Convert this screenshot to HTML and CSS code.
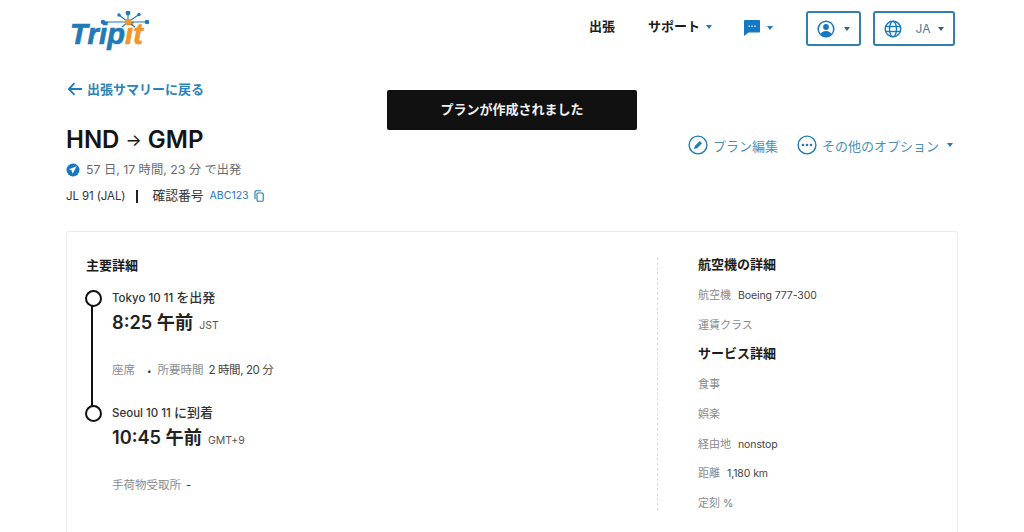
FILE: index.html
```html
<!DOCTYPE html>
<html lang="ja">
<head>
<meta charset="utf-8">
<title>TripIt</title>
<link rel="stylesheet" href="styles.css">
</head>
<body>
<header class="topbar">
  <a class="logo">
    <span class="logo-text"><span class="logo-trip">Trip</span><span class="logo-it">it</span></span>
    <svg class="logo-mark" width="82" height="28" viewBox="0 0 82 28">
      <g stroke="#1f7ab5" stroke-width="1.100">
        <line x1="33" y1="11" x2="77" y2="11"/>
        <line x1="58" y1="11" x2="58" y2="2"/>
        <line x1="58" y1="11" x2="49" y2="4"/>
        <line x1="58" y1="11" x2="69" y2="3.500"/>
        <line x1="58" y1="11" x2="52" y2="16"/>
        <line x1="58" y1="11" x2="65" y2="16"/>
      </g>
      <g fill="#1f7ab5">
        <circle cx="33" cy="11" r="2.300"/>
        <circle cx="77" cy="11" r="2.300"/>
        <circle cx="58" cy="2" r="2.400"/>
        <circle cx="49" cy="4" r="1.700"/>
        <circle cx="69" cy="3.500" r="1.700"/>
      </g>
      <circle cx="58" cy="11" r="3.300" fill="#f2952b"/>
    </svg>
  </a>
  <nav class="nav">
    <span class="nav-link nav-trips">出張</span>
    <span class="nav-link nav-support">サポート<i class="caret"></i></span>
    <span class="nav-msg">
      <svg width="18" height="18" viewBox="0 0 18 18"><path d="M2 1h14a1 1 0 0 1 1 1v10.500a1 1 0 0 1-1 1H5.500L1 17V2a1 1 0 0 1 1-1z" fill="#1578c2"/><g fill="#fff"><rect x="5.500" y="6.500" width="1.300" height="1.300"/><rect x="8.400" y="6.500" width="1.300" height="1.300"/><rect x="11.300" y="6.500" width="1.300" height="1.300"/></g></svg>
      <i class="caret"></i>
    </span>
    <span class="box box-user">
      <svg width="18" height="18" viewBox="0 0 18 18"><circle cx="9" cy="9" r="7.800" fill="#fff" stroke="#1578c2" stroke-width="1.500"/><circle cx="9" cy="7" r="2.900" fill="#1578c2"/><path d="M3.500 14.200C4.500 11.600 6.700 10.900 9 10.900s4.500.7 5.500 3.300A7.500 7.500 0 0 1 9 16.500a7.500 7.500 0 0 1-5.500-2.300z" fill="#1578c2"/></svg>
      <i class="caret caret-dark"></i>
    </span>
    <span class="box box-lang">
      <svg width="18" height="18" viewBox="0 0 18 18" fill="none" stroke="#1578c2" stroke-width="1.400"><circle cx="9" cy="9" r="7.800"/><ellipse cx="9" cy="9" rx="3.500" ry="7.800"/><line x1="1.500" y1="6.500" x2="16.500" y2="6.500"/><line x1="1.500" y1="11.500" x2="16.500" y2="11.500"/></svg>
      <span class="lang">JA</span>
      <i class="caret caret-dark"></i>
    </span>
  </nav>
</header>

<main class="page">
  <a class="back">
    <svg class="back-icon" width="16" height="14" viewBox="0 0 16 14" fill="none" stroke="#1f7ab5" stroke-width="1.800"><path d="M15 7H2M7.500 1.200 1.800 7l5.700 5.800"/></svg>
    出張サマリーに戻る
  </a>

  <section class="summary">
    <div class="summary-left">
      <h1 class="route">HND <span class="arrow">→</span> GMP</h1>
      <div class="countdown">
        <svg width="14" height="14" viewBox="0 0 14 14"><circle cx="7" cy="7" r="6.500" fill="#1578c2"/><path d="M10.800 3.200 2.900 6.300l2.700 1 .9 3.500z" fill="#fff"/></svg>
        57 日, 17 時間, 23 分 で出発
      </div>
      <div class="flight">
        <span class="flight-no">JL 91 (JAL)</span>
        <span class="sep"></span>
        <span class="conf-label">確認番号</span>
        <span class="conf">ABC123</span>
        <svg width="10" height="12" viewBox="0 0 10 12" fill="none" stroke="#1f7ab5" stroke-width="1.100"><rect x="3" y="3" width="6.200" height="8.300" rx="1"/><path d="M1 9V1.800a1 1 0 0 1 1-1h5"/></svg>
      </div>
    </div>
    <div class="actions">
      <span class="action">
        <svg width="20" height="20" viewBox="0 0 20 20" fill="none"><circle cx="10" cy="10" r="8.900" stroke="#1f7ab5" stroke-width="1.400"/><path d="M6 14l.8-3 5-5 2.200 2.200-5 5z" fill="#1f7ab5"/></svg>
        プラン編集
      </span>
      <span class="action">
        <svg width="20" height="20" viewBox="0 0 20 20"><circle cx="10" cy="10" r="8.900" fill="none" stroke="#1f7ab5" stroke-width="1.400"/><g fill="#1f7ab5"><circle cx="6" cy="10" r="1.300"/><circle cx="10" cy="10" r="1.300"/><circle cx="14" cy="10" r="1.300"/></g></svg>
        その他のオプション<i class="caret"></i>
      </span>
    </div>
  </section>

  <section class="card">
    <div class="main-col">
      <h2 class="heading">主要詳細</h2>
      <div class="timeline">
        <div class="stop stop-dep">
          <span class="stop-title">Tokyo 10 11 <span class="jp">を出発</span></span>
          <div class="time"><b>8:25 午前</b><span class="tz">JST</span></div>
          <div class="meta"><span class="label">座席</span><span class="dot">•</span><span class="label">所要時間</span><span class="val">2 時間, 20 分</span></div>
        </div>
        <div class="stop stop-arr">
          <span class="stop-title">Seoul 10 11 <span class="jp">に到着</span></span>
          <div class="time"><b>10:45 午前</b><span class="tz">GMT+9</span></div>
          <div class="meta"><span class="label">手荷物受取所</span><span class="val">-</span></div>
        </div>
      </div>
    </div>
    <aside class="side">
      <h2 class="heading side-heading">航空機の詳細</h2>
      <div class="row"><span class="label">航空機</span><span class="val">Boeing 777-300</span></div>
      <div class="row"><span class="label">運賃クラス</span></div>
      <h2 class="heading side-heading">サービス詳細</h2>
      <div class="row"><span class="label">食事</span></div>
      <div class="row"><span class="label">娯楽</span></div>
      <div class="row"><span class="label">経由地</span><span class="val">nonstop</span></div>
      <div class="row"><span class="label">距離</span><span class="val">1,180 km</span></div>
      <div class="row"><span class="label">定刻</span><span class="pct">%</span></div>
    </aside>
  </section>
</main>

<div class="toast">プランが作成されました</div>
</body>
</html>
```

FILE: styles.css
```css
* { box-sizing: border-box; }
html, body {
  margin: 0;
  height: 532px;
  overflow: hidden;
  background: #fff;
}
body {
  position: relative;
  font-family: Inter, "Noto Sans CJK JP", sans-serif;
  color: #222;
}
.topbar {
  height: 79px;
  display: flex;
  justify-content: space-between;
  padding: 11px 69px 0 70px;
}
.logo {
  position: relative;
  display: block;
  width: 80px;
  height: 36px;
}
.logo-mark {
  position: absolute;
  left: 0;
  top: 0;
}
.logo-text {
  position: absolute;
  left: 0;
  top: 7px;
  font: italic 700 29px/32px "Liberation Sans", sans-serif;
  letter-spacing: .2px;
  -webkit-text-stroke: .7px currentColor;
}
.logo-trip { color: #1f7ab5; }
.logo-it { color: #f2952b; }
.nav {
  display: flex;
  align-items: flex-start;
}
.nav-link {
  font-size: 13px;
  font-weight: 700;
  line-height: 30px;
  color: #1c1c1c;
}
.nav-support { margin-left: 33px; }
.nav-msg {
  display: flex;
  align-items: center;
  height: 33px;
  margin-left: 31px;
}
.caret {
  display: inline-block;
  width: 0;
  height: 0;
  margin-left: 6px;
  vertical-align: middle;
  border-left: 3.500px solid transparent;
  border-right: 3.500px solid transparent;
  border-top: 4px solid #1f7ab5;
}
.caret-dark { border-top-color: #33637f; }
.box {
  display: flex;
  align-items: center;
  height: 35px;
  border: 2px solid #2f80ae;
  border-radius: 3px;
  padding: 0 9px;
  color: #4d7a96;
}
.box-user {
  width: 55px;
  margin-left: 33px;
  justify-content: space-between;
}
.box-lang {
  width: 82px;
  margin-left: 12px;
  justify-content: space-between;
}
.lang { font-size: 12px; margin-left: 6px; }
.box .caret { margin-left: 0; }
.page { padding: 0 66px; }
.back {
  display: flex;
  align-items: center;
  gap: 4px;
  height: 18px;
  font-size: 13px;
  font-weight: 700;
  color: #2b84b8;
  margin-left: 1px;
}
.back-icon { margin-top: 2px; }
.summary {
  display: flex;
  justify-content: space-between;
  margin-top: 27px;
}
.route {
  margin: 0;
  font-size: 24px;
  line-height: 32px;
  font-weight: 600;
  color: #141414;
}
.arrow { font-weight: 400; font-size: 17px; vertical-align: 2px; }
.countdown {
  display: flex;
  align-items: center;
  gap: 6px;
  margin-top: 4px;
  font-size: 12.300px;
  line-height: 20px;
  color: #6b6b6b;
}
.flight {
  display: flex;
  align-items: center;
  margin-top: 6px;
  font-size: 11.500px;
  line-height: 20px;
  color: #333;
}
.flight-no { letter-spacing: -.1px; }
.sep {
  width: 2px;
  height: 13px;
  margin: 0 14px 0 11px;
  background: #222;
}
.conf-label { font-size: 12.800px; }
.conf {
  margin: 0 5px 0 6px;
  font-size: 10.500px;
  color: #1f7ab5;
}
.actions {
  display: flex;
  gap: 19px;
  margin: 10px 5px 0 0;
}
.action {
  display: flex;
  align-items: center;
  gap: 5px;
  height: 22px;
  font-size: 13px;
  color: #4f8fb5;
}
.action .caret { margin-left: 3px; }
.card {
  display: flex;
  margin-top: 25px;
  height: 301px;
  border: 1px solid #ececec;
  border-bottom: 0;
  border-radius: 3px 3px 0 0;
  padding: 23px 0 0 19px;
}
.main-col {
  width: 571px;
  flex: none;
}
.heading {
  margin: 0;
  font-size: 13px;
  line-height: 20px;
  font-weight: 700;
  color: #1c1c1c;
}
.timeline {
  position: relative;
  margin-top: 12px;
  padding-left: 26px;
}
.timeline::before {
  content: "";
  position: absolute;
  left: 5px;
  top: 10px;
  width: 2px;
  height: 114px;
  background: #111;
}
.stop { position: relative; }
.stop::before {
  content: "";
  position: absolute;
  left: -27px;
  top: 3px;
  width: 13px;
  height: 13px;
  border: 2px solid #111;
  border-radius: 50%;
  background: #fff;
}
.stop-title {
  display: block;
  font-size: 11.500px;
  font-weight: 500;
  line-height: 20px;
  color: #333;
}
.jp { font-size: 13px; }
.time {
  display: flex;
  align-items: baseline;
  gap: 6px;
  margin-top: 2px;
}
.time b {
  font-size: 18.200px;
  line-height: 24px;
  font-weight: 600;
  color: #222;
}
.tz { font-size: 10.500px; color: #555; }
.meta {
  margin-top: 26px;
  font-size: 11.500px;
  line-height: 20px;
}
.stop-dep { height: 115px; }
.label { color: #8a8a8a; }
.val { margin-left: 5px; color: #444; letter-spacing: -.4px; }
.dot { margin: 0 6px 0 12px; color: #333; font-size: 8px; }
.pct { margin-left: 3px; color: #777; font-size: 10.500px; }
.side {
  flex: 1;
  border-left: 1px dashed #dcdcdc;
  margin-top: 2px;
  height: 254px;
  padding-left: 40px;
}
.side-heading { margin-bottom: 11px; margin-top: -3px; }
.row + .side-heading { margin-top: -1px; }
.row {
  height: 20px;
  margin-bottom: 9.700px;
  font-size: 11px;
  line-height: 20px;
}
.row .val { margin-left: 7px; font-size: 10.500px; letter-spacing: -.1px; }
.toast {
  position: absolute;
  left: 387px;
  top: 90px;
  width: 250px;
  height: 40px;
  display: flex;
  align-items: center;
  justify-content: center;
  padding-bottom: 3px;
  background: #111;
  border-radius: 2px;
  color: #f2f2f2;
  font-size: 13px;
  font-weight: 700;
}
```
